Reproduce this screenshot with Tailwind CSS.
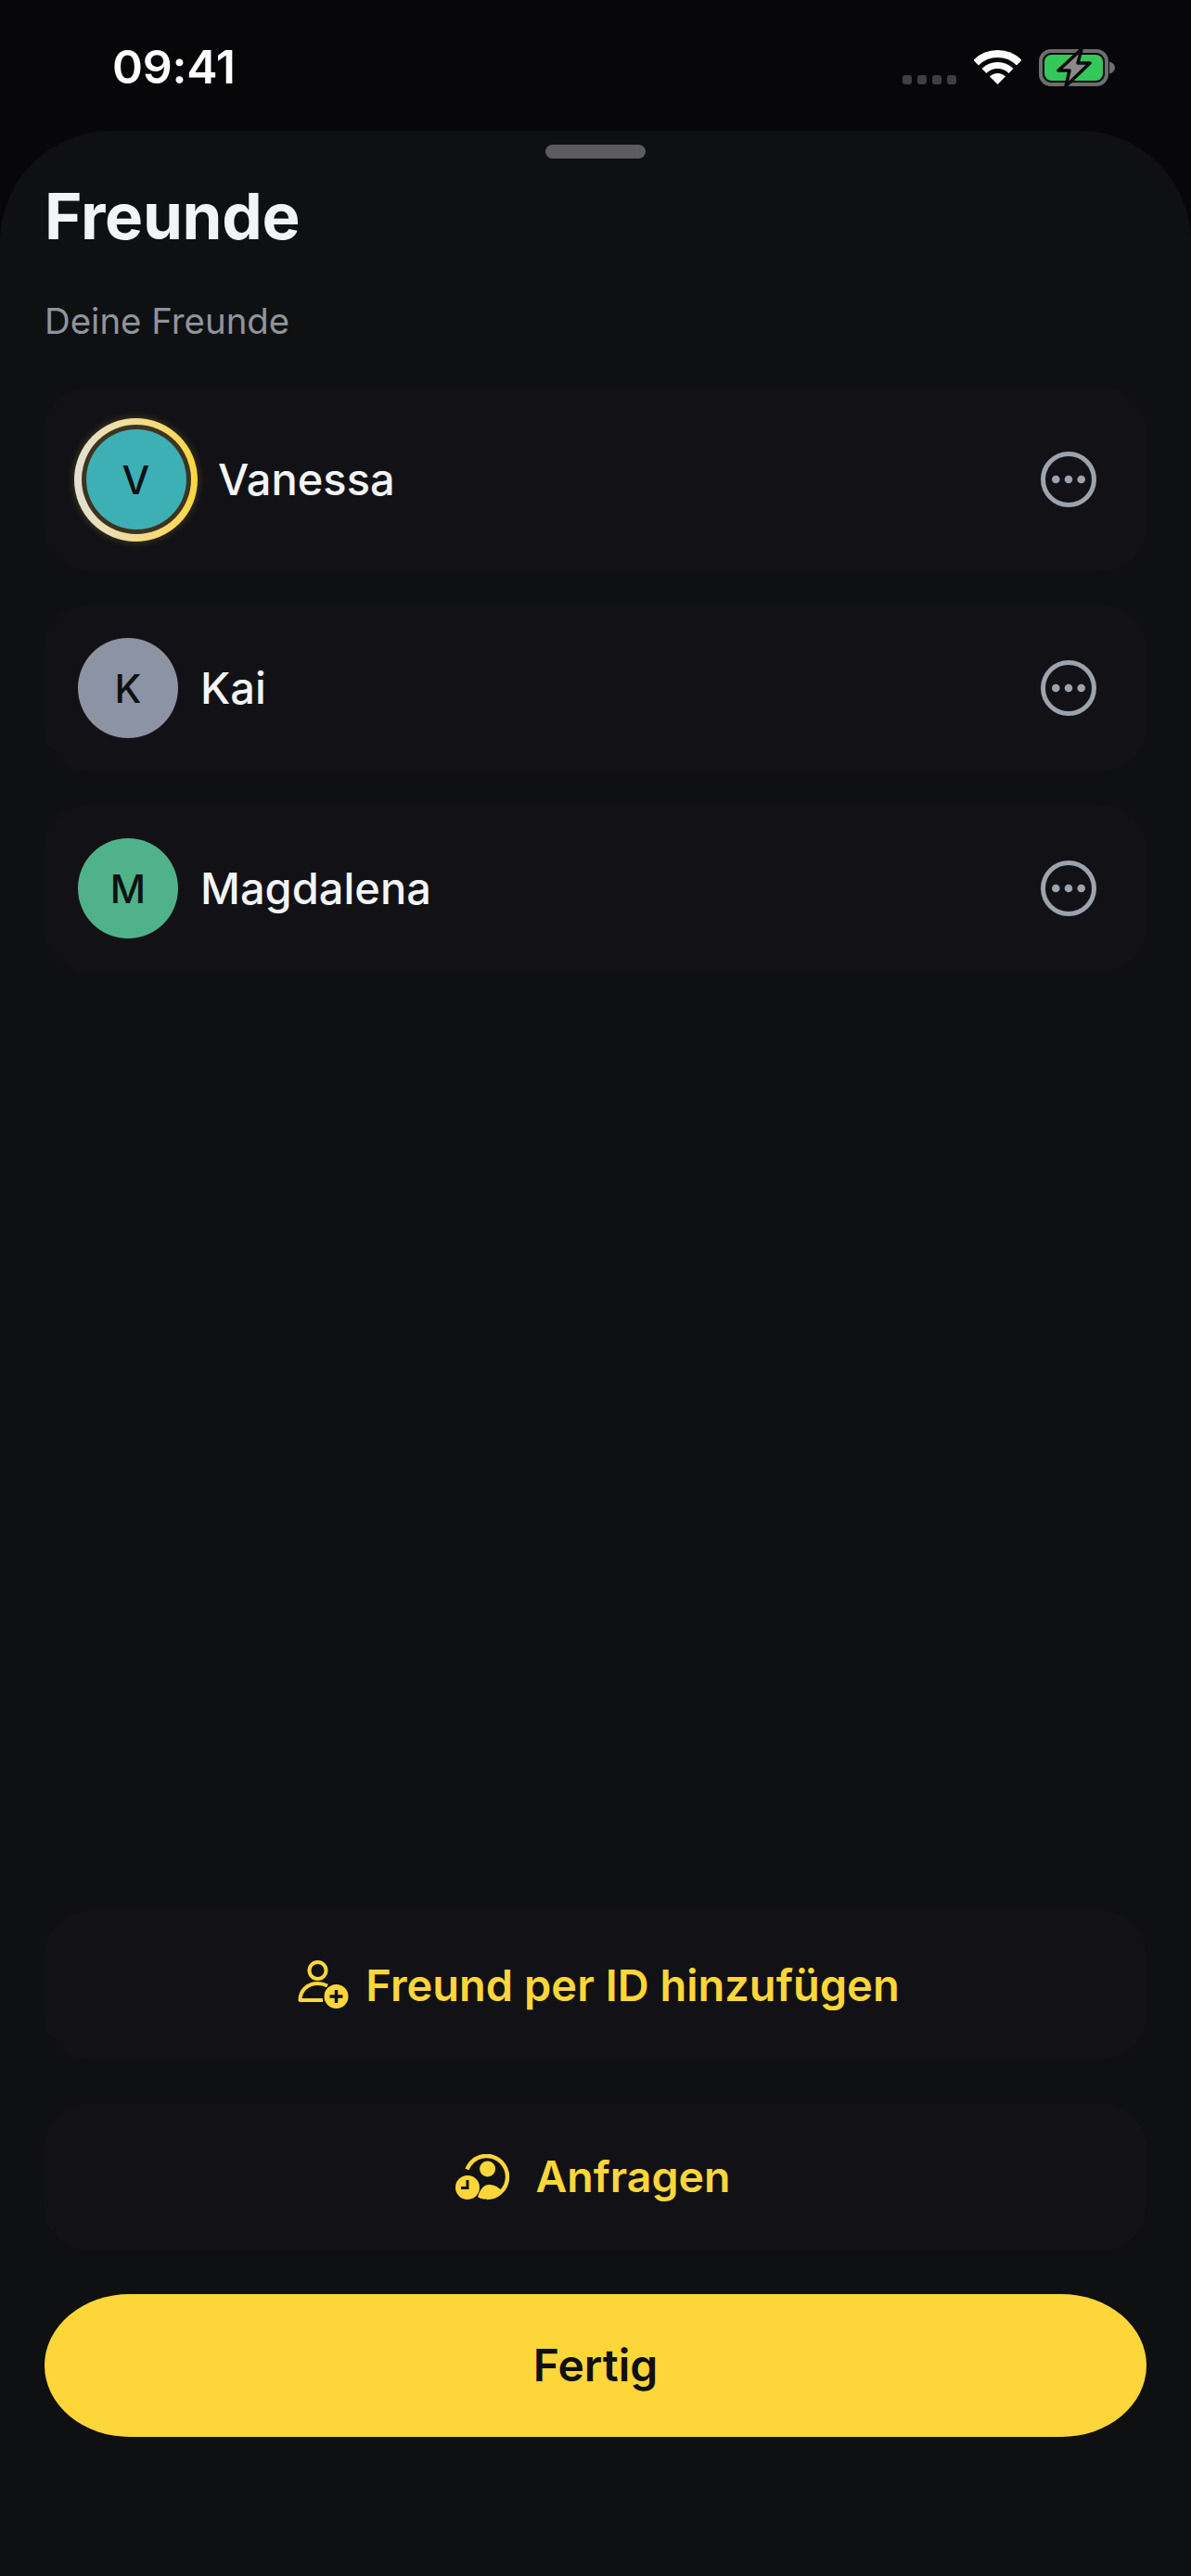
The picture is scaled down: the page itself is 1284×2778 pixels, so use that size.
<!doctype html>
<html lang="de">
<head>
<meta charset="utf-8">
<script src="https://cdn.jsdelivr.net/npm/@tailwindcss/browser@4"></script>
<title>Freunde</title>
</head>
<body class="bg-[#07070a]">
<div class="flex h-[2778px] w-[1284px] flex-col overflow-hidden bg-[#07070a] font-['Inter',sans-serif] text-[#f3f4f6]">
  <!-- status bar -->
  <div class="flex h-[141px] shrink-0 items-start justify-between pl-[121px] pr-[82px]">
    <span class="mt-[42px] text-[50px] leading-[60px] font-semibold tracking-[-0.2px] text-white">09:41</span>
    <div class="mt-[53px] flex items-start">
      <div class="mt-[28px] flex gap-[6px]">
        <span class="size-[10px] rounded-[3px] bg-[#3f3f41]"></span>
        <span class="size-[10px] rounded-[3px] bg-[#3f3f41]"></span>
        <span class="size-[10px] rounded-[3px] bg-[#3f3f41]"></span>
        <span class="size-[10px] rounded-[3px] bg-[#3f3f41]"></span>
      </div>
      <svg class="ml-[19px] mt-[1px]" width="51" height="37" viewBox="0 0 51 37" fill="none">
        <path d="M2.2 13.7A33 33 0 0 1 48.8 13.7" stroke="#fff" stroke-width="8"/>
        <path d="M11 22.5A20.5 20.5 0 0 1 40 22.5" stroke="#fff" stroke-width="7"/>
        <path d="M25.5 37L17 28.5A12 12 0 0 1 34 28.5Z" fill="#fff"/>
      </svg>
      <svg class="ml-[19px] -mt-[1px]" width="82" height="42" viewBox="0 0 82 42" fill="none">
        <rect x="2" y="3" width="71" height="36" rx="11" stroke="#6e6e70" stroke-width="4"/>
        <rect x="6" y="7" width="63" height="28" rx="7.5" fill="#34c759"/>
        <path d="M76 14.5C79 15 82 18 82 21C82 24 79 27 76 27.5Z" fill="#6e6e70"/>
        <path d="M46 1L21 24H33L29 41L55 16H42Z" fill="#8a8a8a" stroke="#08080a" stroke-width="3.5" stroke-linejoin="round"/>
      </svg>
    </div>
  </div>
  <!-- sheet -->
  <div class="flex flex-1 flex-col rounded-t-[120px] bg-[#0f1012] px-[48px] pb-[150px]">
    <div class="mt-[15px] h-[15px] w-[108px] self-center rounded-full bg-[#5b5b60]"></div>
    <h1 class="mt-[20px] text-[69px] leading-[84px] font-bold tracking-[-0.25px]">Freunde</h1>
    <p class="mt-[47px] text-[38.4px] leading-[48px] text-[#8f949c]">Deine Freunde</p>
    <ul class="mt-[48px] flex flex-col gap-[36px]">
      <li class="flex h-[198px] items-center rounded-[48px] bg-[#121216] pl-[32px] pr-[54px]">
        <div class="flex size-[133px] items-center justify-center rounded-full bg-linear-to-r from-[#e2e0d6] via-[#f2dc90] to-[#fdd63a] shadow-[0_0_8px_rgba(253,214,58,0.25)]">
          <div class="flex size-[118px] items-center justify-center rounded-full bg-[#3d3420]">
            <div class="flex size-[108px] items-center justify-center rounded-full bg-[#3cb0b5] text-[42px] font-medium text-[#0f1012]">V</div>
          </div>
        </div>
        <span class="ml-[22px] flex-1 text-[47px] font-medium">Vanessa</span>
        <svg width="60" height="60" viewBox="0 0 60 60" fill="none"><circle cx="30" cy="30" r="27.5" stroke="#9ca3af" stroke-width="5"/><circle cx="16.3" cy="30" r="4.3" fill="#9ca3af"/><circle cx="30" cy="30" r="4.3" fill="#9ca3af"/><circle cx="43.7" cy="30" r="4.3" fill="#9ca3af"/></svg>
      </li>
      <li class="flex h-[180px] items-center rounded-[48px] bg-[#121216] pl-[36px] pr-[54px]">
        <div class="flex size-[108px] items-center justify-center rounded-full bg-[#8c93a3] text-[42px] font-medium text-[#0f1012]">K</div>
        <span class="ml-[24px] flex-1 text-[47px] font-medium">Kai</span>
        <svg width="60" height="60" viewBox="0 0 60 60" fill="none"><circle cx="30" cy="30" r="27.5" stroke="#9ca3af" stroke-width="5"/><circle cx="16.3" cy="30" r="4.3" fill="#9ca3af"/><circle cx="30" cy="30" r="4.3" fill="#9ca3af"/><circle cx="43.7" cy="30" r="4.3" fill="#9ca3af"/></svg>
      </li>
      <li class="flex h-[180px] items-center rounded-[48px] bg-[#121216] pl-[36px] pr-[54px]">
        <div class="flex size-[108px] items-center justify-center rounded-full bg-[#4fb28a] text-[42px] font-medium text-[#0f1012]">M</div>
        <span class="ml-[24px] flex-1 text-[47px] font-medium">Magdalena</span>
        <svg width="60" height="60" viewBox="0 0 60 60" fill="none"><circle cx="30" cy="30" r="27.5" stroke="#9ca3af" stroke-width="5"/><circle cx="16.3" cy="30" r="4.3" fill="#9ca3af"/><circle cx="30" cy="30" r="4.3" fill="#9ca3af"/><circle cx="43.7" cy="30" r="4.3" fill="#9ca3af"/></svg>
      </li>
    </ul>
    <div class="mt-auto flex flex-col">
      <button class="flex h-[160px] items-center justify-center rounded-[48px] bg-[#121216] pl-[7px] text-[47px] font-semibold text-[#fdd63a]">
        <svg class="mr-[18px] mb-[2px]" width="55" height="52" viewBox="0 0 55 52" fill="none">
          <circle cx="21.5" cy="11" r="9" stroke="#fdd63a" stroke-width="4"/>
          <path d="M32 27.5C28 25.5 24.5 25 21.5 25C10 25 2.5 33 2.5 43H27" stroke="#fdd63a" stroke-width="4" stroke-linejoin="round"/>
          <circle cx="41.5" cy="39" r="13" fill="#fdd63a"/>
          <path d="M41.5 32V46M34.5 39H48.5" stroke="#121216" stroke-width="3.5"/>
        </svg>
        Freund per ID hinzufügen
      </button>
      <button class="mt-[48px] flex h-[158px] items-center justify-center rounded-[48px] bg-[#121216] pr-[5px] text-[46.5px] font-semibold text-[#fdd63a]">
        <svg class="mr-[28px]" width="58" height="50" viewBox="0 0 58 50" fill="none">
          <path d="M12.5 16.5A22.5 22.5 0 1 1 33.6 47" stroke="#fdd63a" stroke-width="4.5"/>
          <circle cx="34.6" cy="16" r="8.5" fill="#fdd63a"/>
          <path d="M24 46C27 37 31 33 36 33C41 33 46 35 49 39C45 44 39 48 33 48.5C29 48.5 26 48 24 46Z" fill="#fdd63a"/>
          <circle cx="13" cy="36" r="13" fill="#fdd63a"/>
          <path d="M13 28V36.5H6" stroke="#121216" stroke-width="3"/>
        </svg>
        Anfragen
      </button>
      <button class="mt-[47px] flex h-[154px] items-center justify-center rounded-[92px/77px] bg-[#fdd63a] text-[48px] font-semibold text-[#0f1012]">Fertig</button>
    </div>
  </div>
</div>
</body>
</html>
